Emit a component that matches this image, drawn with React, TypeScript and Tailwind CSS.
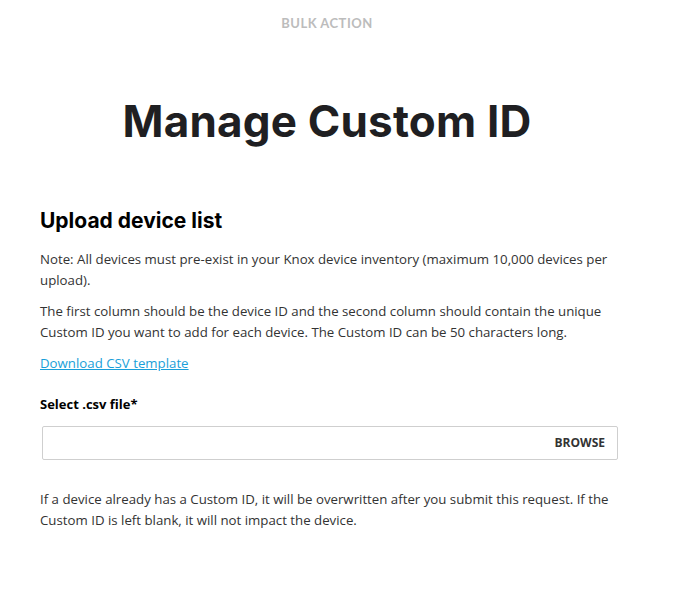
export default function App() {
    return (
        <div className="min-h-[593px] bg-white text-[#333] font-['Open_Sans',sans-serif]">
            <div className="w-[654px]">
                <div className="pt-[14px] text-center text-[13px] font-bold tracking-[0.5px] text-[#bcbcbc] font-['Lato',sans-serif]">
                    BULK ACTION
                </div>
                <h1 className="mt-[60px] text-center text-[44px] leading-[54px] font-bold text-[#1f1f22] tracking-[0.2px] font-['Inter',sans-serif]">
                    Manage Custom ID
                </h1>
            </div>
            <div className="px-[40px] pt-[59px] w-[654px]">
                <h2 className="text-[21px] leading-[28px] font-bold text-black font-['Inter',sans-serif]">
                    Upload device list
                </h2>
                <p className="mt-[14px] text-[13.25px] leading-[21px]">
                    Note: All devices must pre-exist in your Knox device inventory (maximum 10,000 devices per upload).
                </p>
                <p className="mt-[10px] text-[13.25px] leading-[21px]">
                    The first column should be the device ID and the second column should contain the unique Custom ID you want to add for each device. The Custom ID can be 50 characters long.
                </p>
                <a href="#" className="mt-[10px] inline-block text-[13.25px] leading-[21px] text-[#1a9fd9] underline">
                    Download CSV template
                </a>
                <div className="mt-[20px] text-[13px] leading-[20px] font-bold text-black">
                    Select .csv file*
                </div>
                <div className="mt-[12px] ml-[2px] w-[576px] h-[34px] border border-[#cfcfcf] rounded-[2px] flex items-center justify-end pr-[12px]">
                    <span className="text-[12px] font-bold text-[#333]">BROWSE</span>
                </div>
                <p className="mt-[29px] text-[13.25px] leading-[21px]">
                    If a device already has a Custom ID, it will be overwritten after you submit this request. If the Custom ID is left blank, it will not impact the device.
                </p>
            </div>
        </div>
    );
}
